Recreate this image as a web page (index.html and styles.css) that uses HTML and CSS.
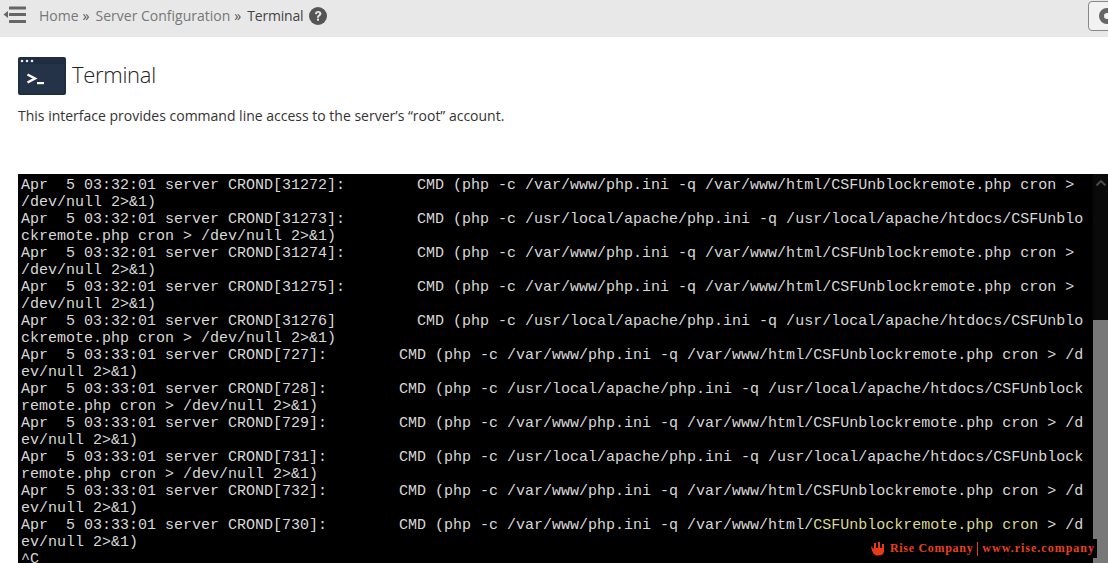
FILE: index.html
```html
<!DOCTYPE html>
<html lang="en">
<head>
<meta charset="utf-8">
<title>Terminal</title>
<link rel="stylesheet" href="styles.css">
</head>
<body>
<header class="topbar">
  <svg class="menu-icon" viewBox="0 0 24 18" width="24" height="18" aria-hidden="true">
    <rect x="6" y="0.5" width="17" height="3" rx="0.5"/>
    <rect x="6" y="7" width="17" height="3" rx="0.5"/>
    <rect x="6" y="14" width="17" height="3" rx="0.5"/>
    <path d="M0.5 8.5 L5 5 V12 Z"/>
  </svg>
  <nav class="crumbs">
    <a>Home</a><span class="sep">»</span>
    <a>Server Configuration</a><span class="sep">»</span>
    <span class="current">Terminal</span>
    <svg class="help" viewBox="0 0 18 18" width="18" height="18" aria-hidden="true">
      <circle cx="9" cy="9" r="9"/>
      <path d="M5.9 6.9 C6 5 7.4 4 9.2 4 C11 4 12.4 5.1 12.4 6.7 C12.4 8.9 9.9 8.8 9.9 10.7 H8 C8 8 10.2 8 10.2 6.8 C10.2 6.2 9.8 5.8 9.1 5.8 C8.4 5.8 8 6.3 7.9 7.2 Z" fill="#e8e8e8"/>
      <rect x="8" y="11.6" width="2" height="2.1" fill="#e8e8e8"/>
    </svg>
  </nav>
  <div class="top-button"><span class="top-button-dot"></span></div>
</header>

<main class="content">
  <div class="title-row">
    <svg class="term-icon" viewBox="0 0 48 38" width="48" height="38" aria-hidden="true">
      <rect width="48" height="38" rx="2" fill="#1f2d40"/>
      <rect x="2" y="7" width="44" height="29" fill="#243347"/>
      <circle cx="4" cy="4" r="1.3" fill="#e8edf2"/>
      <circle cx="9" cy="4" r="1.3" fill="#e8edf2"/>
      <circle cx="14" cy="4" r="1.3" fill="#e8edf2"/>
      <path d="M9.5 17.500 L17 21.500 L9.500 25.500" fill="none" stroke="#fff" stroke-width="2.4"/>
      <rect x="19" y="25" width="7" height="2.200" fill="#fff"/>
    </svg>
    <h1>Terminal</h1>
  </div>
  <p class="intro">This interface provides command line access to the server’s “root” account.</p>

  <section class="terminal">
    <pre class="screen">Apr  5 03:32:01 server CROND[31272]:        CMD (php -c /var/www/php.ini -q /var/www/html/CSFUnblockremote.php cron &gt;
/dev/null 2&gt;&amp;1)
Apr  5 03:32:01 server CROND[31273]:        CMD (php -c /usr/local/apache/php.ini -q /usr/local/apache/htdocs/CSFUnblo
ckremote.php cron &gt; /dev/null 2&gt;&amp;1)
Apr  5 03:32:01 server CROND[31274]:        CMD (php -c /var/www/php.ini -q /var/www/html/CSFUnblockremote.php cron &gt;
/dev/null 2&gt;&amp;1)
Apr  5 03:32:01 server CROND[31275]:        CMD (php -c /var/www/php.ini -q /var/www/html/CSFUnblockremote.php cron &gt;
/dev/null 2&gt;&amp;1)
Apr  5 03:32:01 server CROND[31276]         CMD (php -c /usr/local/apache/php.ini -q /usr/local/apache/htdocs/CSFUnblo
ckremote.php cron &gt; /dev/null 2&gt;&amp;1)
Apr  5 03:33:01 server CROND[727]:        CMD (php -c /var/www/php.ini -q /var/www/html/CSFUnblockremote.php cron &gt; /d
ev/null 2&gt;&amp;1)
Apr  5 03:33:01 server CROND[728]:        CMD (php -c /usr/local/apache/php.ini -q /usr/local/apache/htdocs/CSFUnblock
remote.php cron &gt; /dev/null 2&gt;&amp;1)
Apr  5 03:33:01 server CROND[729]:        CMD (php -c /var/www/php.ini -q /var/www/html/CSFUnblockremote.php cron &gt; /d
ev/null 2&gt;&amp;1)
Apr  5 03:33:01 server CROND[731]:        CMD (php -c /usr/local/apache/php.ini -q /usr/local/apache/htdocs/CSFUnblock
remote.php cron &gt; /dev/null 2&gt;&amp;1)
Apr  5 03:33:01 server CROND[732]:        CMD (php -c /var/www/php.ini -q /var/www/html/CSFUnblockremote.php cron &gt; /d
ev/null 2&gt;&amp;1)
Apr  5 03:33:01 server CROND[730]:        CMD (php -c /var/www/php.ini -q /var/www/html/<span class="hl">CSFUnblockremote.php cron</span> &gt; /d
ev/null 2&gt;&amp;1)
^C</pre>
    <div class="scrollbar">
      <svg class="scroll-up" viewBox="0 0 10 6" width="10" height="6" aria-hidden="true"><path d="M0.5 5.5 L5 1 L9.5 5.5" fill="none" stroke="#4a4a4a" stroke-width="2"/></svg>
      <div class="scroll-thumb"></div>
    </div>
    <div class="watermark">
      <svg viewBox="0 0 16 15" width="16" height="15" aria-hidden="true"><path d="M1 5 L4 8 V2 H6 V7 H8 V1 H10 V7 H12 V3 H14 V10 C14 13 12 14.500 8 14.500 C4 14.500 2 12 1 5 Z" fill="#e8391a"/></svg>
      <span>Rise Company</span><span class="wm-sep"></span><span>www.rise.company</span>
    </div>
  </section>
</main>
</body>
</html>
```
FILE: styles.css
```css
* { box-sizing: border-box; }
html, body { margin: 0; padding: 0; height: 100%; overflow: hidden; }
body { background: #fff; color: #333; font-family: "Open Sans", "Liberation Sans", sans-serif; font-size: 14px; }

.topbar { height: 37px; background: #e8e8e8; display: flex; align-items: center; padding-left: 3px; overflow: hidden; }
.menu-icon { fill: #666; flex: none; margin-top: -7px; }
.crumbs { display: flex; align-items: center; margin-left: 12px; flex: 1; line-height: 20px; margin-top: -6px; }
.crumbs a { color: #777; }
.sep { color: #555; margin: 0 6px 0 4px; }
.current { color: #444; letter-spacing: -0.2px; }
.help { fill: #555; margin-left: 6px; margin-top: 1px; }
.top-button { width: 30px; height: 30px; margin-right: -10px; margin-top: -6px; border: 1px solid #888; border-radius: 4px; background: #f2f2f2; display: flex; align-items: center; padding-left: 10px; flex: none; }
.top-button-dot { width: 16px; height: 16px; flex: none; border-radius: 50%; border: 5px solid #666; }

.content { padding-left: 18px; }
.title-row { display: flex; align-items: flex-start; gap: 6px; margin-top: 20px; height: 38px; }
.term-icon { flex: none; }
h1 { margin: 0; font-size: 22px; font-weight: 300; letter-spacing: -0.3px; color: #222; line-height: 34px; }
.intro { margin: 11px 0 0; line-height: 20px; font-size: 14px; color: #333; }

.terminal { position: relative; display: flex; height: 389px; margin-top: 48px; background: #000; overflow: hidden; }
.screen { flex: 1; margin: 0; padding: 3px 0 0 3px; font-family: "Liberation Mono", "DejaVu Sans Mono", monospace; font-size: 15px; line-height: 17px; color: #d8d8d8; white-space: pre; overflow: hidden; }
.hl { color: #d8d890; }
.scrollbar { width: 15px; flex: none; background: #0a0a0a; display: flex; flex-direction: column; align-items: center; }
.scroll-up { margin-top: 6px; }
.scroll-thumb { width: 100%; height: 243px; margin-top: auto; background: #787878; }

.watermark { position: absolute; right: 11px; bottom: 5px; height: 19px; padding: 0 2px 0 6px; background: #000; color: #e8401c; display: flex; align-items: center; gap: 4px; font-family: "Liberation Serif", serif; font-size: 12px; font-weight: 700; letter-spacing: 0.7px; white-space: nowrap; }
.wm-sep { width: 1px; height: 14px; background: #e8401c; }
.watermark span:last-child { letter-spacing: 1px; }
```
